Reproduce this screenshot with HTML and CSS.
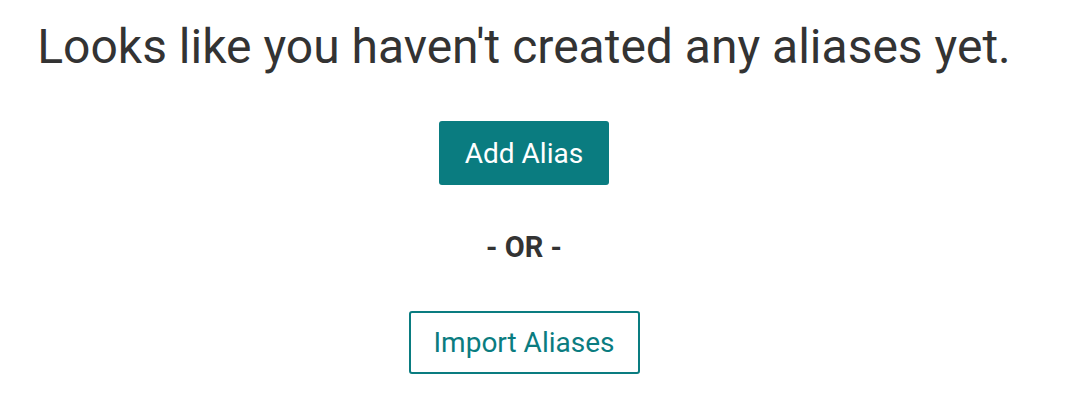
FILE: index.html
```html
<!DOCTYPE html>
<html>
<head>
<meta charset="utf-8">
<link rel="stylesheet" href="styles.css">
</head>
<body>
<main class="empty">
  <h1 class="empty-title">Looks like you haven't created any aliases yet.</h1>
  <button class="btn btn-primary">Add Alias</button>
  <p class="or">- OR -</p>
  <button class="btn btn-outline">Import Aliases</button>
</main>
</body>
</html>
```
FILE: styles.css
```css
html, body {
  margin: 0;
  padding: 0;
  background: #ffffff;
}
body {
  font-family: Roboto, "Liberation Sans", sans-serif;
  color: #333333;
}
.empty {
  width: 1048px;
  display: flex;
  flex-direction: column;
  align-items: center;
}
.empty-title {
  margin: 19px 0 0;
  font-size: 48px;
  font-weight: 400;
  line-height: 56px;
  color: #333333;
  white-space: nowrap;
}
.btn {
  font-family: Roboto, "Liberation Sans", sans-serif;
  font-size: 28px;
  border-radius: 3px;
  cursor: pointer;
  box-sizing: border-box;
}
.btn-primary {
  margin-top: 46px;
  width: 170px;
  height: 64px;
  background: #0a7c80;
  color: #ffffff;
  border: none;
}
.or {
  margin: 44px 0 0;
  font-size: 29px;
  font-weight: 700;
  line-height: 36px;
  color: #333333;
}
.btn-outline {
  margin-top: 46px;
  width: 231px;
  height: 63px;
  background: #ffffff;
  color: #0a7c80;
  border: 2px solid #0a7c80;
}
```
